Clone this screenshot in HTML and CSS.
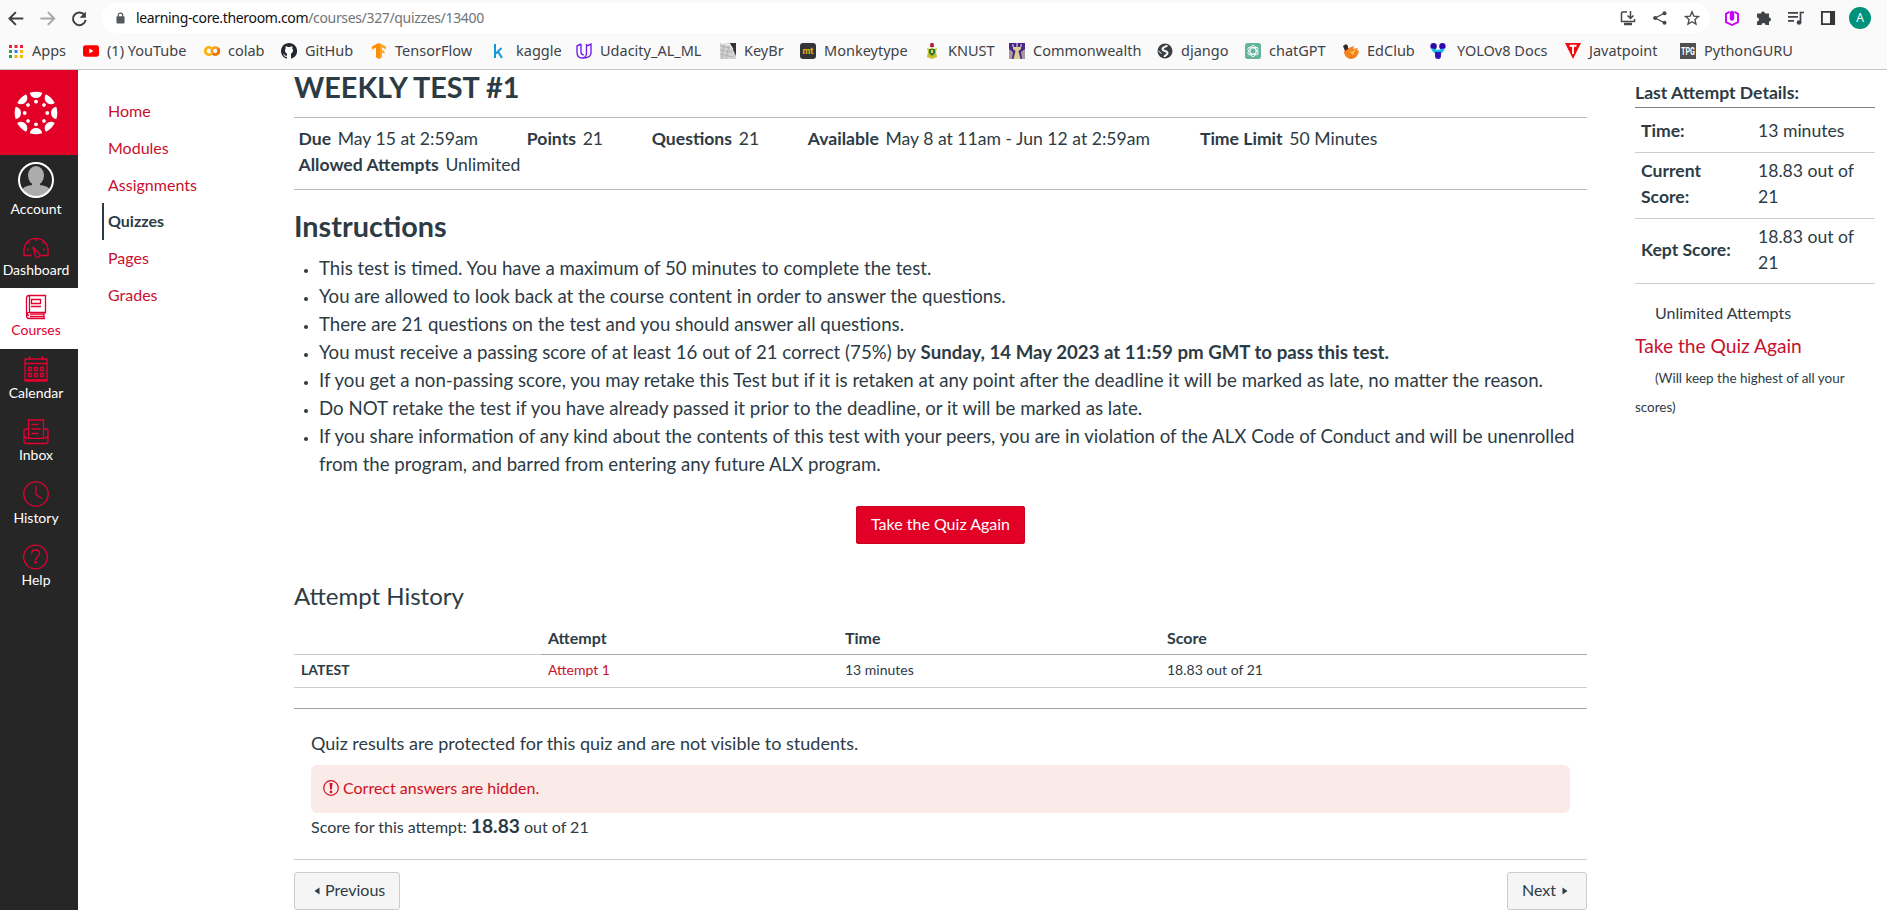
FILE: index.html
```html
<!DOCTYPE html>
<html lang="en">
<head>
<meta charset="utf-8">
<title>WEEKLY TEST #1</title>
<link rel="stylesheet" href="styles.css">
</head>
<body>
<header class="chrome">
  <div class="toolbar">
    <svg class="nav-ico" viewBox="0 0 24 24"><path d="M23 12H4M12.500 3l-9 9 9 9" fill="none" stroke="#3c4043" stroke-width="2.8"/></svg>
    <svg class="nav-ico" viewBox="0 0 24 24"><path d="M2 12h19M12.500 3l9 9-9 9" fill="none" stroke="#a6a8ab" stroke-width="2.8"/></svg>
    <svg class="nav-ico" viewBox="0 0 24 24"><path d="M19 7a9 9 0 1 0 1.700 7" fill="none" stroke="#3c4043" stroke-width="2.800"/><path d="M21 2v9h-9z" fill="#3c4043"/></svg>
    <div class="omnibox">
      <svg class="lock" viewBox="0 0 10 13"><rect x="0.500" y="4.500" width="9" height="8" rx="1" fill="#55585c"/><path d="M2.500 5V3.500a2.500 2.500 0 0 1 5 0V5" fill="none" stroke="#55585c" stroke-width="1.300"/></svg>
      <span class="url"><b>learning-core.theroom.com</b>/courses/327/quizzes/13400</span>
      <span class="omni-icons">
        <svg viewBox="0 0 16 16" fill="none" stroke="#45484b" stroke-width="1.500"><path d="M7 2H2.500Q1.500 2 1.500 3v8.500h13V9M10.500 1v7M7.500 5.500l3 3 3-3"/><path d="M4 14h8" stroke-width="2.500"/></svg>
        <svg viewBox="0 0 16 16"><path d="M13 3L3 8l10 5" fill="none" stroke="#45484b" stroke-width="1.300"/><g fill="#45484b"><circle cx="12.500" cy="3.200" r="2"/><circle cx="3.200" cy="8" r="2.100"/><circle cx="12.500" cy="12.800" r="2"/></g></svg>
        <svg viewBox="0 0 16 16"><path d="M8 1.800l1.800 4.300 4.700.4-3.600 3 1.100 4.600L8 11.700l-4 2.400 1.100-4.600-3.600-3 4.700-.4z" fill="none" stroke="#45484b" stroke-width="1.300"/></svg>
      </span>
    </div>
    <div class="extensions">
      <svg viewBox="0 0 16 16"><path d="M5.500 1.800L2 3.900v8.200L8 15l6-2.900V3.900l-3.500-2.100" fill="none" stroke="#c800f5" stroke-width="1.900"/><path d="M5.800 2v6.500a2.200 2.200 0 0 0 4.400 0V2L8 .5z" fill="#c800f5"/></svg>
      <svg viewBox="0 0 16 16"><path d="M1 3.500h4a2 2 0 1 1 4 0h4v4a2 2 0 1 1 0 4V15H9.500a2 2 0 1 0-4 0H1v-3.500a2 2 0 1 0 0-4z" fill="#3f4246"/></svg>
      <svg viewBox="0 0 16 16"><path d="M0 2.800h10M0 6.800h10M0 10.800h6M12.500 13V2.500H16" fill="none" stroke="#3f4246" stroke-width="1.700"/><circle cx="11" cy="12.500" r="2.300" fill="#3f4246"/></svg>
      <svg viewBox="0 0 16 16"><path d="M1.900 1.900h12.200v12.200H1.900z" fill="none" stroke="#34373a" stroke-width="1.900"/><path d="M10 2h4v12h-4z" fill="#34373a"/></svg>
      <span class="profile">A</span>
    </div>
  </div>
  <nav class="bookmarks">
    <a><svg viewBox="0 0 16 16"><g fill="#ea1f3c"><path d="M1 2h3v3H1zM6.500 2h3v3h-3zM12 2h3v3h-3z"/></g><path d="M1 7h3v3H1z" fill="#1fa24a"/><path d="M6.500 7h3v3h-3z" fill="#3979ea"/><path d="M12 7h3v3h-3z" fill="#f5b700"/><path d="M1 12h3v3H1z" fill="#1fa24a"/><path d="M6.500 12h3v3h-3zM12 12h3v3h-3z" fill="#f5b700"/></svg><span>Apps</span></a>
    <a><svg viewBox="0 0 16 16"><rect y="2.300" width="16" height="11.400" rx="2.600" fill="#f00"/><path d="M6.300 5.600v4.800l4.200-2.400z" fill="#fff"/></svg><span>(1) YouTube</span></a>
    <a><svg viewBox="0 0 16 16" fill="none" stroke-width="2.600"><path d="M7.200 5.300A3.600 3.600 0 1 0 7.200 10.700" stroke="#ffb000"/><circle cx="11.300" cy="8" r="3.500" stroke="#f9a01b"/><path d="M13.800 5.500a3.500 3.500 0 0 1-5 5" stroke="#e8710a"/></svg><span>colab</span></a>
    <a><svg viewBox="0 0 16 16"><path d="M8 0C3.600 0 0 3.600 0 8c0 3.500 2.300 6.500 5.500 7.600.4.100.5-.2.500-.4v-1.400c-2.200.5-2.700-1-2.700-1-.4-.9-.9-1.200-.9-1.200-.7-.5.100-.5.100-.5.800.1 1.200.8 1.200.8.700 1.300 1.900.9 2.300.7V10.500C4.500 9.800 4 8.800 4 7.500c0-.900.200-1.600.7-2.100-.1-.2-.4-1 .1-2.100 0 0 .7-.2 2 .7h2.400c1.300-.9 2-.7 2-.7.400 1.100.2 1.900.1 2.100.5.600.7 1.300.7 2.100 0 1.300-.5 2.300-2 3.100V15.200c0 .2.100.5.600.4A8 8 0 0 0 8 0z" fill="#24292f"/></svg><span>GitHub</span></a>
    <a><svg viewBox="0 0 16 16"><path d="M7.500 0L1 3.600v3l4-2.200v9.800L7.500 16z" fill="#ff8f00"/><path d="M8.500 0L15 3.600v3l-4-2.200v2.400l2.500 1.400v2.700L11 9.500v4.700L8.500 16z" fill="#ffa726"/><path d="M7 .5h2v15H7z" fill="#ff8f00"/></svg><span>TensorFlow</span></a>
    <a><svg viewBox="0 0 16 16"><path d="M3 1v14M9.500 5L4 10.500M6 8.500L10 15" fill="none" stroke="#129bd2" stroke-width="2"/></svg><span>kaggle</span></a>
    <a><svg viewBox="0 0 16 16" fill="none" stroke="#7420e8" stroke-width="1.400"><path d="M5 1L1 3v6q0 6 5 6 4.500 0 4.500-5V3L15 1v9q0 5-8 5M5 1v8q0 2.700 2.700 3M10.500 3V1"/></svg><span>Udacity_AL_ML</span></a>
    <a><svg viewBox="0 0 16 16"><path d="M0 0h16v16H0z" fill="#d2d2d2"/><path d="M10 0h6v13z" fill="#333"/><path d="M0 3l10 2M0 7l12 2M0 11l13 3M4 0L2 16M9 3L6 16" stroke="#aaa" stroke-width=".8" fill="none"/><path d="M1 0l9 2 3 4" stroke="#fff" fill="none"/></svg><span>KeyBr</span></a>
    <a><svg viewBox="0 0 16 16"><rect width="16" height="16" rx="3" fill="#323437"/><text x="8" y="11" class="ico-mt">mt</text></svg><span>Monkeytype</span></a>
    <a><svg viewBox="0 0 16 16"><path d="M6.500 0h3l.5 4H6z" fill="#b51b35"/><path d="M3 5l3 1 2-2 2 2 3-1-1 4 1 5-5 2-5-2 1-5z" fill="#c5bd2c"/><path d="M5 6h6v4l-3 3-3-3z" fill="#277a42"/><path d="M7 7h2v3H7z" fill="#e8d951"/></svg><span>KNUST</span></a>
    <a><svg viewBox="0 0 16 16"><path d="M0 0h16v16H0z" fill="#a999a5"/><path d="M0 0h16v6L12 9l1 7h-2L9 9H7l-2 7H3l1-7-4-3z" fill="#4b2589"/><path d="M4 4h8v2L9.500 8l2 8h-7l2-8L4 6z" fill="#d8cf91"/><path d="M4 1v3M8 0v4M12 1v3" stroke="#efe6ef"/></svg><span>Commonwealth</span></a>
    <a><svg viewBox="0 0 16 16"><circle cx="8" cy="8" r="7.500" fill="#3c4043"/><path d="M10.500 2.500C8 4 5.500 4 5.500 6.300s5 1 5 3.700-3 1.500-3 4" stroke="#fafafa" stroke-width="2" fill="none"/><path d="M1.500 8l3 2.500" stroke="#fafafa"/></svg><span>django</span></a>
    <a><svg viewBox="0 0 16 16"><rect width="16" height="16" rx="2.500" fill="#62b59c"/><g fill="none" stroke="#fff" stroke-width="0.900"><ellipse cx="8" cy="8" rx="3" ry="5.600"/><ellipse cx="8" cy="8" rx="3" ry="5.600" transform="rotate(60 8 8)"/><ellipse cx="8" cy="8" rx="3" ry="5.600" transform="rotate(120 8 8)"/></g></svg><span>chatGPT</span></a>
    <a><svg viewBox="0 0 16 16"><path d="M3 6l8-3-1 3 5-1-1 2 2 1c-1 5-4 8-8 8S1 12 1 9z" fill="#f58220"/><path d="M0 3l3-2 2 2v3L2 8z" fill="#382a20"/><path d="M5 7l3 2 5-3-3 6z" fill="#ffc23c"/></svg><span>EdClub</span></a>
    <a><svg viewBox="0 0 16 16"><circle cx="3.600" cy="3.200" r="3.200" fill="#3008a8"/><circle cx="12.400" cy="3.200" r="3.200" fill="#3008a8"/><path d="M1 5l7 2 7-2q-2 6-7 6T1 5z" fill="#19b9e8"/><path d="M5 9h6v4a3 3 0 0 1-6 0z" fill="#3414b6"/></svg><span>YOLOv8 Docs</span></a>
    <a><svg viewBox="0 0 16 16"><path d="M0 0h16L8 16z" fill="#f20a0a"/><path d="M4.500 2.800h7M8 3v8" stroke="#fff" stroke-width="1.900"/></svg><span>Javatpoint</span></a>
    <a><svg viewBox="0 0 16 16"><path d="M0 0h16v16H0z" fill="#505050"/><text x="8" y="11.500" class="ico-tpg" textLength="14" lengthAdjust="spacingAndGlyphs">TPG</text></svg><span>PythonGURU</span></a>
  </nav>
</header>

<div class="page">
  <nav class="global-nav">
    <a class="logo"><svg viewBox="-22 -22 44 44" fill="#fff"><defs><g id="seg"><path d="M-6.200-20.300Q0-22.300 6.200-20.300C5.200-13.200-5.200-13.200-6.200-20.300z"/><circle cx="0" cy="-11.300" r="1.900"/></g></defs><use href="#seg"/><use href="#seg" transform="rotate(45)"/><use href="#seg" transform="rotate(90)"/><use href="#seg" transform="rotate(135)"/><use href="#seg" transform="rotate(180)"/><use href="#seg" transform="rotate(225)"/><use href="#seg" transform="rotate(270)"/><use href="#seg" transform="rotate(315)"/></svg></a>
    <a class="g-item account"><svg class="avatar" viewBox="0 0 36 36"><defs><clipPath id="av"><circle cx="18" cy="18" r="16.500"/></clipPath></defs><g clip-path="url(#av)" fill="#acacac"><ellipse cx="18" cy="13.500" rx="8" ry="9.500"/><path d="M14 20h8v3q9 1 11 6v7H3v-7q2-5 11-6z"/></g><circle cx="18" cy="18" r="17" fill="none" stroke="#fff" stroke-width="2"/></svg><span>Account</span></a>
    <a class="g-item dashboard"><svg viewBox="0 0 26 26" class="line"><path d="M8.500 22.500H1v-5.200a12 12 0 0 1 24 0v5.200h-7.500M10 14l6.500 7q1 2-1 3t-3-1zM13 8V6M6.500 10.500L5 9.500M19.500 10.500l1.500-1M4 16.500h2M20 16.500h2"/></svg><span>Dashboard</span></a>
    <a class="g-item active"><svg viewBox="0 1 26 24" class="line"><path d="M6 21.500Q3.500 21 3.500 18.500v-14Q3.500 1.500 6 1.500h16.500v17H6q-2.500 0-2.500 3t2.500 3h16M6.500 2v16M21 19v5.500M7 20.200h14M7 22.500h14M8.500 5.500h9v4h-9zM8 12.500h10"/></svg><span>Courses</span></a>
    <a class="g-item"><svg viewBox="0 0 26 26" class="line"><path d="M2 3h22v22H2zM2 7.500h22M6.500 0v4M19.500 0v4M5.500 11.500h3v3h-3zM11.500 11.500h3v3h-3zM17.500 11.500h3v3h-3zM5.500 17.500h3v3h-3zM11.500 17.500h3v3h-3zM17.500 17.500h3v3h-3zM2 23.700h22"/></svg><span>Calendar</span></a>
    <a class="g-item"><svg viewBox="0 0 26 26" class="line"><path d="M5.500 19V1h15v18M5.500 10H3q-2 0-2 2v10q0 2.500 2.500 2.500h19q2.500 0 2.500-2.500V12q0-2-2-2h-2.500M1 16.500q1 2.800 4 2.800h16q3 0 4-2.800M8.500 5.500h7M8.500 10h9M8.500 14.500h7"/></svg><span>Inbox</span></a>
    <a class="g-item"><svg viewBox="0 0 26 26" class="line"><circle cx="13" cy="13" r="12.200"/><path d="M13 5v8.500l6 4"/></svg><span>History</span></a>
    <a class="g-item"><svg viewBox="0 0 26 26" class="line"><circle cx="12.500" cy="13" r="11.800"/><path d="M8.500 9.500Q8.700 6 12.500 6T16.600 9.500C16.600 12.500 12.700 12.500 12.700 16"/><circle cx="12.600" cy="18.300" r=".8"/></svg><span>Help</span></a>
  </nav>

  <nav class="course-nav">
    <a>Home</a><a>Modules</a><a>Assignments</a><a class="current">Quizzes</a><a>Pages</a><a>Grades</a>
  </nav>

  <main class="content">
    <h1>WEEKLY TEST #1</h1>
    <ul class="facts">
      <li class="due"><b>Due</b>May 15 at 2:59am</li>
      <li><b>Points</b>21</li>
      <li><b>Questions</b>21</li>
      <li class="avail"><b>Available</b>May 8 at 11am - Jun 12 at 2:59am</li>
      <li class="limit"><b>Time Limit</b>50 Minutes</li>
      <li><b>Allowed Attempts</b>Unlimited</li>
    </ul>
    <h2>Instructions</h2>
    <ul class="rules">
      <li>This test is timed. You have a maximum of 50 minutes to complete the test.</li>
      <li>You are allowed to look back at the course content in order to answer the questions.</li>
      <li>There are 21 questions on the test and you should answer all questions.</li>
      <li>You must receive a passing score of at least 16 out of 21 correct (75%) by <b>Sunday, 14 May 2023 at 11:59 pm GMT to pass this test.</b></li>
      <li>If you get a non-passing score, you may retake this Test but if it is retaken at any point after the deadline it will be marked as late, no matter the reason.</li>
      <li>Do NOT retake the test if you have already passed it prior to the deadline, or it will be marked as late.</li>
      <li>If you share information of any kind about the contents of this test with your peers, you are in violation of the ALX Code of Conduct and will be unenrolled<br>from the program, and barred from entering any future ALX program.</li>
    </ul>
    <div class="retake"><a class="btn-primary">Take the Quiz Again</a></div>
    <h3>Attempt History</h3>
    <table class="history">
      <thead><tr><td></td><th>Attempt</th><th>Time</th><th>Score</th></tr></thead>
      <tbody><tr><th>LATEST</th><td><a>Attempt 1</a></td><td>13 minutes</td><td>18.83 out of 21</td></tr></tbody>
    </table>
    <section class="results">
      <p class="protected">Quiz results are protected for this quiz and are not visible to students.</p>
      <div class="alert"><svg viewBox="0 0 16 16"><circle cx="8" cy="8" r="7.300" fill="none" stroke="#d01020" stroke-width="1.200"/><path d="M6.500 3h3L8.800 9.500H7.200z" fill="#d01020"/><circle cx="8" cy="11.900" r="1.300" fill="#d01020"/></svg>Correct answers are hidden.</div>
      <p class="score">Score for this attempt: <b>18.83</b> out of 21</p>
    </section>
    <footer class="pager">
      <a class="btn prev"><svg viewBox="0 0 6 8"><path d="M5.500.5v7L.5 4z"/></svg>Previous</a>
      <a class="btn next">Next<svg viewBox="0 0 6 8"><path d="M.5.500v7l5-3.500z"/></svg></a>
    </footer>
  </main>

  <aside class="details">
    <h4>Last Attempt Details:</h4>
    <dl>
      <div><dt>Time:</dt><dd>13 minutes</dd></div>
      <div><dt>Current Score:</dt><dd>18.83 out of 21</dd></div>
      <div><dt>Kept Score:</dt><dd>18.83 out of 21</dd></div>
    </dl>
    <p class="unlimited">Unlimited Attempts</p>
    <a class="again">Take the Quiz Again</a>
    <p class="keep">(Will keep the highest of all your scores)</p>
  </aside>
</div>
</body>
</html>
```
FILE: styles.css
```css
* { box-sizing: border-box; }
body { margin: 0; height: 910px; overflow: hidden; background: #fff; color: #2d3b45; font-family: Lato, sans-serif; font-size: 16px; }
h1, h2, h3, h4, p, ul, dl, dd { margin: 0; padding: 0; }
svg { display: block; flex: none; overflow: visible; }

.chrome { height: 70px; background: #fafafa; border-bottom: 1px solid #c4c6c6; font-family: "Noto Sans", sans-serif; color: #3f4246; }
.toolbar { display: flex; align-items: center; height: 36px; padding-left: 7px; }
.nav-ico { width: 17px; height: 17px; margin-right: 15px; }
.omnibox { display: flex; align-items: center; height: 30px; width: 1608px; padding: 0 10px 0 14px; margin-left: -1px; border-radius: 15px; background: #fff; }
.lock { width: 9px; height: 12px; margin-right: 11px; }
.url { margin-top: -1px; font-size: 14px; color: #707478; letter-spacing: -.34px; }
.url b { font-weight: 400; color: #111; }
.omni-icons { display: flex; gap: 16px; margin-left: auto; }
.omni-icons svg { width: 16px; height: 16px; }
.extensions { display: flex; align-items: center; gap: 16px; margin-left: 14px; }
.extensions svg { width: 16px; height: 16px; }
.profile { width: 22px; height: 22px; margin-left: -3px; border-radius: 50%; background: #00917a; color: #fff; font-size: 12px; line-height: 22px; text-align: center; }
.bookmarks { display: grid; grid-template-columns: 75px 121px 77px 90px 121px 84px 144px 80px 124px 85px 148px 88px 98px 87px 135px 115px 120px; height: 29px; padding-left: 8px; }
.bookmarks a { display: flex; align-items: center; gap: 8px; white-space: nowrap; font-size: 14.500px; }
.bookmarks a:nth-child(15) { gap: 11px; }
.bookmarks svg { width: 16px; height: 16px; }
.bookmarks span { margin-top: -1px; }
.ico-mt { font: 700 9px Roboto, sans-serif; fill: #e2b714; text-anchor: middle; }
.ico-tpg { font: 700 10px Roboto, sans-serif; fill: #fff; text-anchor: middle; }

.page { display: grid; grid-template-columns: 78px 216px 1293px 240px; height: 840px; }
.global-nav { background: #262626; color: #fff; font-size: 14px; }
.logo { display: flex; justify-content: center; align-items: center; height: 85px; padding: 1px 6px 0 0; background: #e20026; }
.logo svg { width: 44px; height: 44px; }
.g-item { display: flex; flex-direction: column; align-items: center; height: 62.500px; padding: 7px 6px 0 0; }
.g-item svg { width: 26px; height: 26px; }
.g-item span { line-height: 18px; margin-top: 1.500px; }
.g-item .avatar { width: 36px; height: 36px; }
.account { height: 71px; }
.line { fill: none; stroke: #e20031; stroke-width: 1.300; }
.dashboard { height: 62px; }
.active { height: 61px; background: #fff; color: #e20031; }
.active svg { height: 24px; }

.course-nav { display: flex; flex-direction: column; padding: 23px 0 0 24px; }
.course-nav a { height: 36.800px; line-height: 36px; padding-left: 4px; border-left: 2px solid transparent; color: #c8102e; font-size: 16px; }
.course-nav .current { border-color: #2d3b45; color: #2d3b45; font-weight: 700; }

h1 { height: 48px; line-height: 34px; font-size: 28.800px; font-weight: 700; border-bottom: 1px solid #b5b8ba; }
.facts { display: flex; flex-wrap: wrap; align-content: flex-start; height: 72px; padding: 8px 4.500px; list-style: none; font-size: 17.600px; line-height: 26px; border-bottom: 1px solid #b5b8ba; }
.facts li { margin-right: 48.700px; white-space: nowrap; }
.facts b { margin-right: 6.700px; }
.facts .avail { margin-right: 50px; }
.facts .limit { margin-right: 200px; }
h2 { height: 64px; padding-top: 19px; line-height: 34px; font-size: 28.800px; font-weight: 700; }
.rules { padding-left: 25px; font-size: 18.667px; line-height: 28px; height: 252px; white-space: nowrap; }
.rules li::marker { font-size: 13px; }
.btn-primary { display: block; width: 169px; height: 38px; border-radius: 3px; background: #e20026; box-shadow: inset 0 0 0 1px #c90022; color: #fff; text-align: center; line-height: 36px; }
.retake { display: flex; justify-content: center; height: 75px; }
h3 { font-size: 24px; font-weight: 400; line-height: 30px; height: 42px; }
.history { width: 100%; table-layout: fixed; border-collapse: collapse; font-size: 14px; }
.history td, .history th { padding: 0 7px 2px; text-align: left; border-bottom: 1px solid #c7cdd1; height: 33px; }
.history thead td, .history thead th { height: 31px; }
.history thead th { border-color: #a4abb0; font-size: 16px; }
.history tr > :nth-child(1) { width: 247px; }
.history tr > :nth-child(2) { width: 297px; }
.history tr > :nth-child(3) { width: 322px; }
.history a { color: #c8102e; }
.results { height: 152px; margin-top: 20px; padding: 23px 17px 0; border-top: 1px solid #a0a5a9; border-bottom: 1px solid #c7cdd1; }
.protected { height: 33px; line-height: 22px; font-size: 18px; }
.alert { display: flex; align-items: center; gap: 4px; height: 48px; padding: 0 0 3px 12px; border-radius: 6px; background: #faeae8; color: #d01020; }
.alert svg { width: 16px; height: 16px; margin-top: 2px; }
.score { line-height: 26px; font-size: 16px; }
.score b { font-size: 19.200px; }
.pager { display: flex; justify-content: space-between; padding-top: 12px; }
.btn { display: flex; align-items: center; gap: 5px; height: 38px; border: 1px solid #c7cdd1; border-radius: 3px; background: #f5f5f5; padding-bottom: 2px; }
.btn svg { width: 6px; height: 8px; margin-top: 3px; fill: #2d3b45; }
.prev { width: 106px; padding-left: 19px; }
.next { width: 80px; padding-left: 14px; gap: 6px; }

.details { margin-left: 48px; width: 240px; }
.details h4 { height: 38px; padding-top: 11px; line-height: 24px; font-size: 17.600px; border-bottom: 1px solid #7d858b; }
.details dl > div { display: grid; grid-template-columns: 117px 1fr; align-items: center; height: 65.500px; padding: 0 0 2px 6px; border-bottom: 1px solid #c7cdd1; font-size: 17.600px; line-height: 26px; }
.details dl > div:first-child { height: 45px; padding: 1px 0 0 6px; }
.details dt { font-weight: 700; padding-right: 20px; }
.details dd { padding-right: 20px; }
.unlimited { padding: 15px 0 0 20px; line-height: 28px; }
.again { display: block; color: #c8102e; font-size: 19.200px; line-height: 38px; }
.keep { font-size: 13.450px; line-height: 29px; text-indent: 20px; margin-top: -1px; }
```
